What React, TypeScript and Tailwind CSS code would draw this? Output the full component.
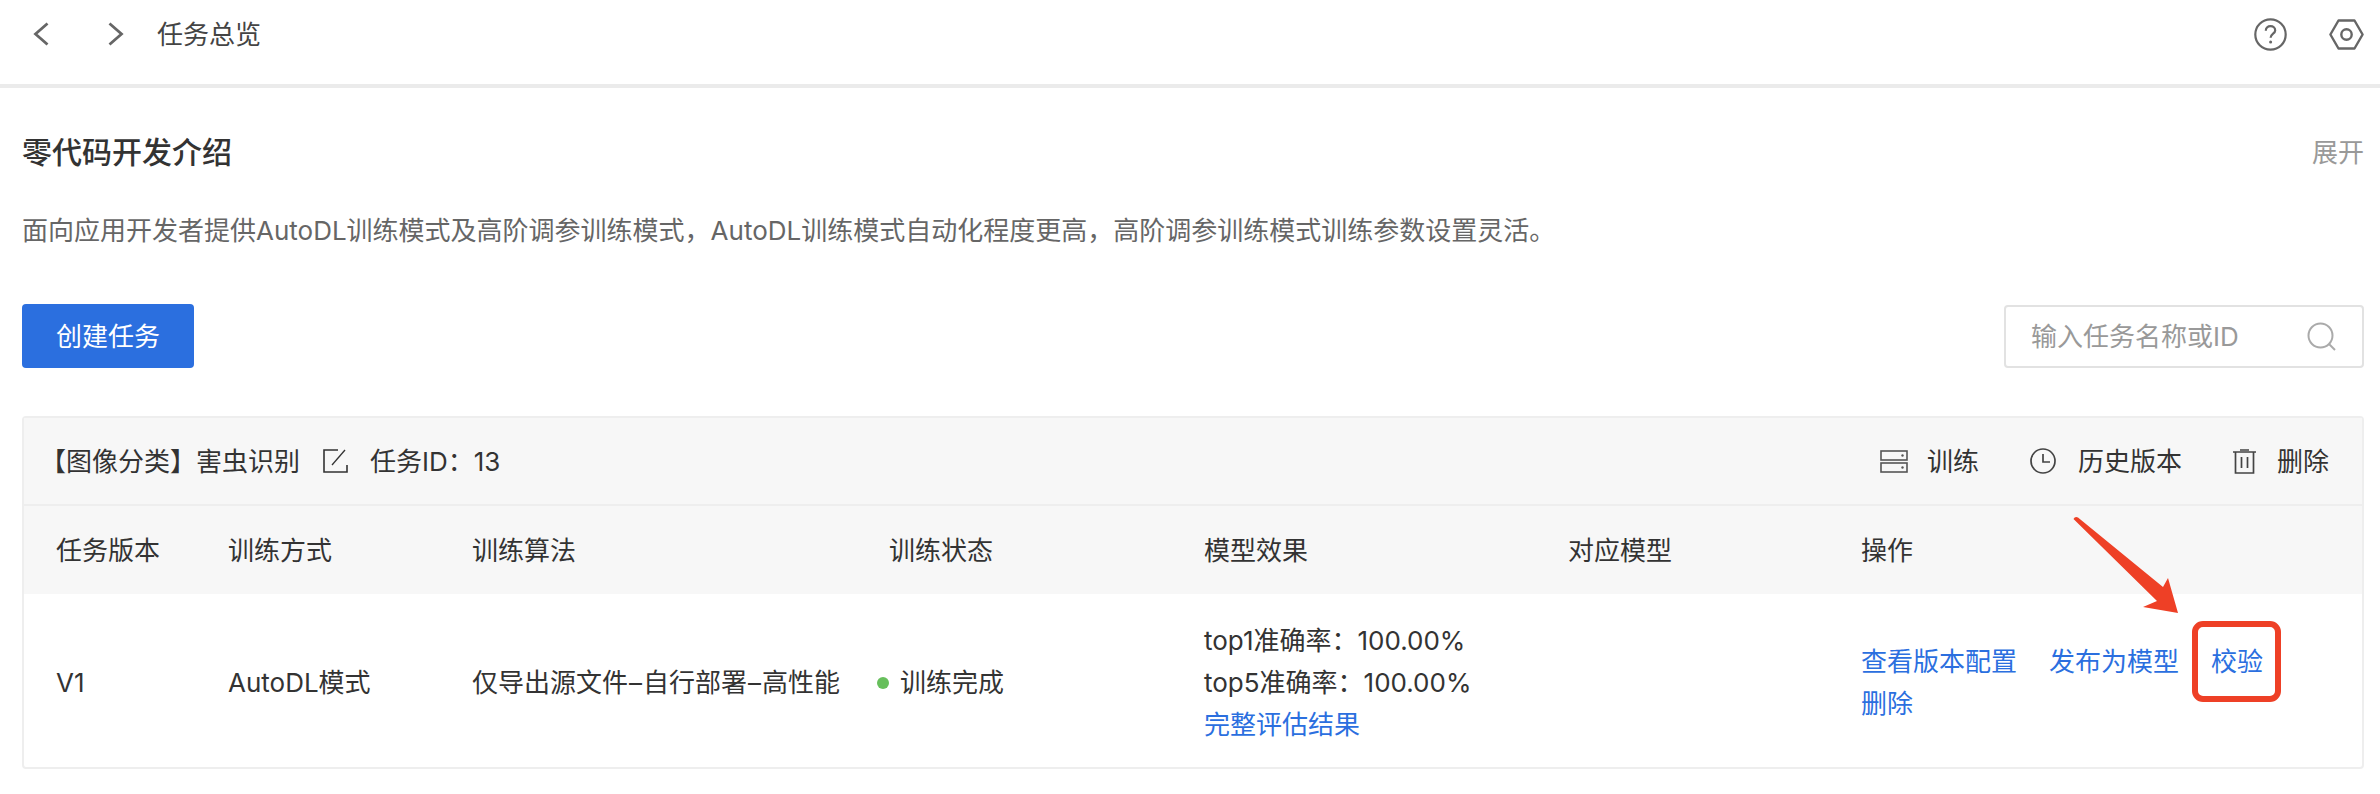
const FONT = "font-['Inter','Noto_Sans_CJK_SC',sans-serif]";

function ChevronLeft() {
  return (
    <svg width="16" height="24" viewBox="0 0 16 24" fill="none" stroke="#666" strokeWidth="2.8">
      <path d="M14.5 1.5 L2.5 12 L14.5 22.5" />
    </svg>
  );
}

function ChevronRight() {
  return (
    <svg width="16" height="24" viewBox="0 0 16 24" fill="none" stroke="#666" strokeWidth="2.8">
      <path d="M1.5 1.5 L13.5 12 L1.5 22.5" />
    </svg>
  );
}

function HelpIcon() {
  return (
    <svg width="33" height="33" viewBox="0 0 33 33" fill="none" stroke="#666" strokeWidth="2.2">
      <circle cx="16.5" cy="16.5" r="15.2" />
      <path d="M11.8 12.8 C11.8 9.8 14 8.2 16.5 8.2 C19.2 8.2 21.2 10 21.2 12.4 C21.2 15.6 16.6 15.8 16.6 19.8" />
      <circle cx="16.6" cy="24" r="1.5" fill="#666" stroke="none" />
    </svg>
  );
}

function HexIcon() {
  return (
    <svg width="35" height="31" viewBox="0 0 35 31" fill="none" stroke="#666" strokeWidth="2.4">
      <path d="M9.5 1.5 H25.5 L33.6 15.5 L25.5 29.5 H9.5 L1.4 15.5 Z" strokeLinejoin="round" />
      <circle cx="17.5" cy="15.5" r="5.2" />
    </svg>
  );
}

function SearchIcon() {
  return (
    <svg width="29" height="29" viewBox="0 0 29 29" fill="none" stroke="#aaa" strokeWidth="2">
      <circle cx="13.5" cy="13.5" r="12" />
      <path d="M22 22 L28 28" />
    </svg>
  );
}

function EditIcon() {
  return (
    <svg width="25" height="24" viewBox="0 0 25 24" fill="none" stroke="#333" strokeWidth="1.6">
      <path d="M15 1 H1 V23 H24 V16" />
      <path d="M9 16 L22 1" strokeWidth="1.3" />
    </svg>
  );
}

function ServerIcon() {
  return (
    <svg width="28" height="23" viewBox="0 0 28 23" fill="none" stroke="#555" strokeWidth="1.6">
      <rect x="1" y="1" width="26" height="9" />
      <rect x="1" y="13" width="26" height="9" />
      <circle cx="22.5" cy="5.5" r="1.2" fill="#555" stroke="none" />
      <circle cx="22.5" cy="17.5" r="1.2" fill="#555" stroke="none" />
    </svg>
  );
}

function ClockIcon() {
  return (
    <svg width="26" height="26" viewBox="0 0 26 26" fill="none" stroke="#444" strokeWidth="1.7">
      <circle cx="13" cy="13" r="12" />
      <path d="M13 6 V14 H20" />
    </svg>
  );
}

function TrashIcon() {
  return (
    <svg width="23" height="25" viewBox="0 0 23 25" fill="none" stroke="#444" strokeWidth="1.7">
      <path d="M0 3 H23 M7 1 H16" />
      <path d="M2.5 3 V24 H20.5 V3" />
      <path d="M8.5 8 V19 M14.5 8 V19" />
    </svg>
  );
}

function RedArrow() {
  return (
    <svg
      className="absolute left-[2060px] top-[510px]"
      width="130"
      height="110"
      viewBox="2060 510 130 110"
      fill="#ee4026"
    >
      <path d="M2073.5 519 Q2075 516 2078 517.5 L2163 587 L2168 578 L2178 613 L2143 607 L2157 601 Z" />
    </svg>
  );
}

const COLUMNS = "grid grid-cols-[172px_244px_417px_315px_364px_293px_1fr] pl-[32px]";

export default function App() {
  return (
    <div className={`relative min-h-[794px] bg-white text-[26px] text-[#333] ${FONT}`}>
      {/* top bar */}
      <header className="flex h-[88px] items-center border-b-4 border-[#ebebeb] pb-[16px] pl-[33px] pr-[16px]">
        <ChevronLeft />
        <span className="ml-[59px]"><ChevronRight /></span>
        <span className="ml-[33px] text-[#444]">任务总览</span>
        <div className="ml-auto flex items-center gap-[42px]">
          <HelpIcon />
          <HexIcon />
        </div>
      </header>

      <main className="pl-[22px] pr-[16px]">
        <div className="mt-[43px] flex h-[42px] items-center justify-between">
          <h1 className="text-[30px] font-medium leading-[42px]">零代码开发介绍</h1>
          <span className="text-[#999]">展开</span>
        </div>
        <p className="mt-[37px] leading-[42px] text-[#666]">
          面向应用开发者提供AutoDL训练模式及高阶调参训练模式，AutoDL训练模式自动化程度更高，高阶调参训练模式训练参数设置灵活。
        </p>

        <div className="mt-[52px] flex items-center justify-between">
          <button className="h-[64px] w-[172px] rounded-[4px] bg-[#2b6fdf] text-white">创建任务</button>
          <div className="flex h-[63px] w-[360px] items-center justify-between rounded-[4px] border-2 border-[#e2e2e2] pl-[25px] pr-[26px]">
            <span className="text-[#999]">输入任务名称或ID</span>
            <SearchIcon />
          </div>
        </div>

        <section className="mt-[48px] rounded-[4px] border-2 border-[#eeeeee]">
          <div className="flex h-[86px] items-center justify-between bg-[#f7f7f7] pl-[16px] pr-[33px]">
            <div className="flex items-center">
              <span>【图像分类】害虫识别</span>
              <span className="ml-[23px]"><EditIcon /></span>
              <span className="ml-[22px]">任务ID：13</span>
            </div>
            <div className="flex items-center">
              <ServerIcon />
              <span className="ml-[19px]">训练</span>
              <span className="ml-[51px]"><ClockIcon /></span>
              <span className="ml-[22px]">历史版本</span>
              <span className="ml-[51px]"><TrashIcon /></span>
              <span className="ml-[21px]">删除</span>
            </div>
          </div>

          <div className={`${COLUMNS} h-[90px] items-center border-t-2 border-[#eeeeee] bg-[#f7f7f7]`}>
            <span>任务版本</span>
            <span>训练方式</span>
            <span>训练算法</span>
            <span>训练状态</span>
            <span>模型效果</span>
            <span>对应模型</span>
            <span>操作</span>
          </div>

          <div className={`${COLUMNS} h-[173px] items-center pt-[4px]`}>
            <span>V1</span>
            <span>AutoDL模式</span>
            <span className="whitespace-nowrap">
              仅导出源文件<span className="mx-[1px]">–</span>自行部署<span className="mx-[1px]">–</span>高性能
            </span>
            <span className="-ml-[12px] flex items-center gap-[11px]">
              <i className="size-[12px] rounded-full bg-[#67bf5c]" />
              训练完成
            </span>
            <div className="leading-[42px]">
              <div>top1准确率：100.00%</div>
              <div>top5准确率：100.00%</div>
              <a className="text-[#2b6fdf]">完整评估结果</a>
            </div>
            <span />
            <div className="leading-[42px] text-[#2b6fdf]">
              <div className="flex gap-[32px] whitespace-nowrap">
                <a>查看版本配置</a>
                <a>发布为模型</a>
                <a className="relative">
                  校验
                  <i className="absolute -left-[19px] -top-[20px] h-[81px] w-[89px] rounded-[11px] border-[6px] border-[#ee4026]" />
                </a>
              </div>
              <a>删除</a>
            </div>
          </div>
        </section>
      </main>

      <RedArrow />
    </div>
  );
}
